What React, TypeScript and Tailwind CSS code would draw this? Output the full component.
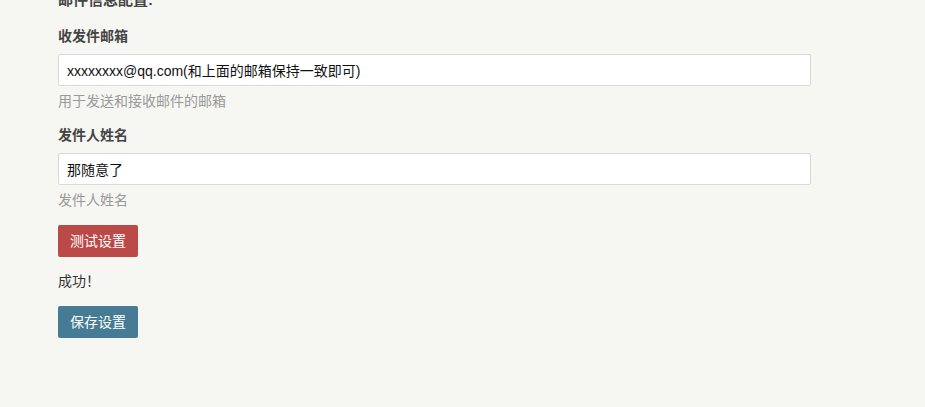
const font = { fontFamily: '"Liberation Sans", "Noto Sans CJK SC", sans-serif' }

function Field({ label, value, help }: { label: string; value: string; help: string }) {
  return (
    <li className="flex flex-col">
      <label className="h-[20px] text-[14px] leading-[20px] font-bold text-[#444]">{label}</label>
      <input
        readOnly
        value={value}
        className="mt-[8px] h-[32px] w-[753px] rounded-[2px] border border-[#d9d9d6] bg-white px-[8px] text-[14px] text-[#111] outline-none"
        style={font}
      />
      <p className="mt-[5px] h-[20px] text-[14px] leading-[20px] text-[#999]">{help}</p>
    </li>
  )
}

export default function App() {
  return (
    <div className="h-[407px] w-[925px] overflow-hidden bg-[#f6f6f2] text-[#444]" style={font}>
      <div className="-mt-[10px] pl-[58px]">
        <h3 className="h-[20px] text-[15px] leading-[20px] font-bold text-[#444]">邮件信息配置:</h3>
        <ul className="mt-[16px] flex flex-col gap-[14px]">
          <Field label="收发件邮箱" value="xxxxxxxx@qq.com(和上面的邮箱保持一致即可)" help="用于发送和接收邮件的邮箱" />
          <Field label="发件人姓名" value="那随意了" help="发件人姓名" />
        </ul>
        <button className="mt-[15px] h-[32px] w-[80px] rounded-[2px] bg-[#b94a48] text-[14px] text-white">测试设置</button>
        <p className="mt-[14px] h-[20px] text-[14px] leading-[20px] text-[#333]">成功！</p>
        <button className="mt-[15px] h-[32px] w-[80px] rounded-[2px] bg-[#467b96] text-[14px] text-white">保存设置</button>
      </div>
    </div>
  )
}
